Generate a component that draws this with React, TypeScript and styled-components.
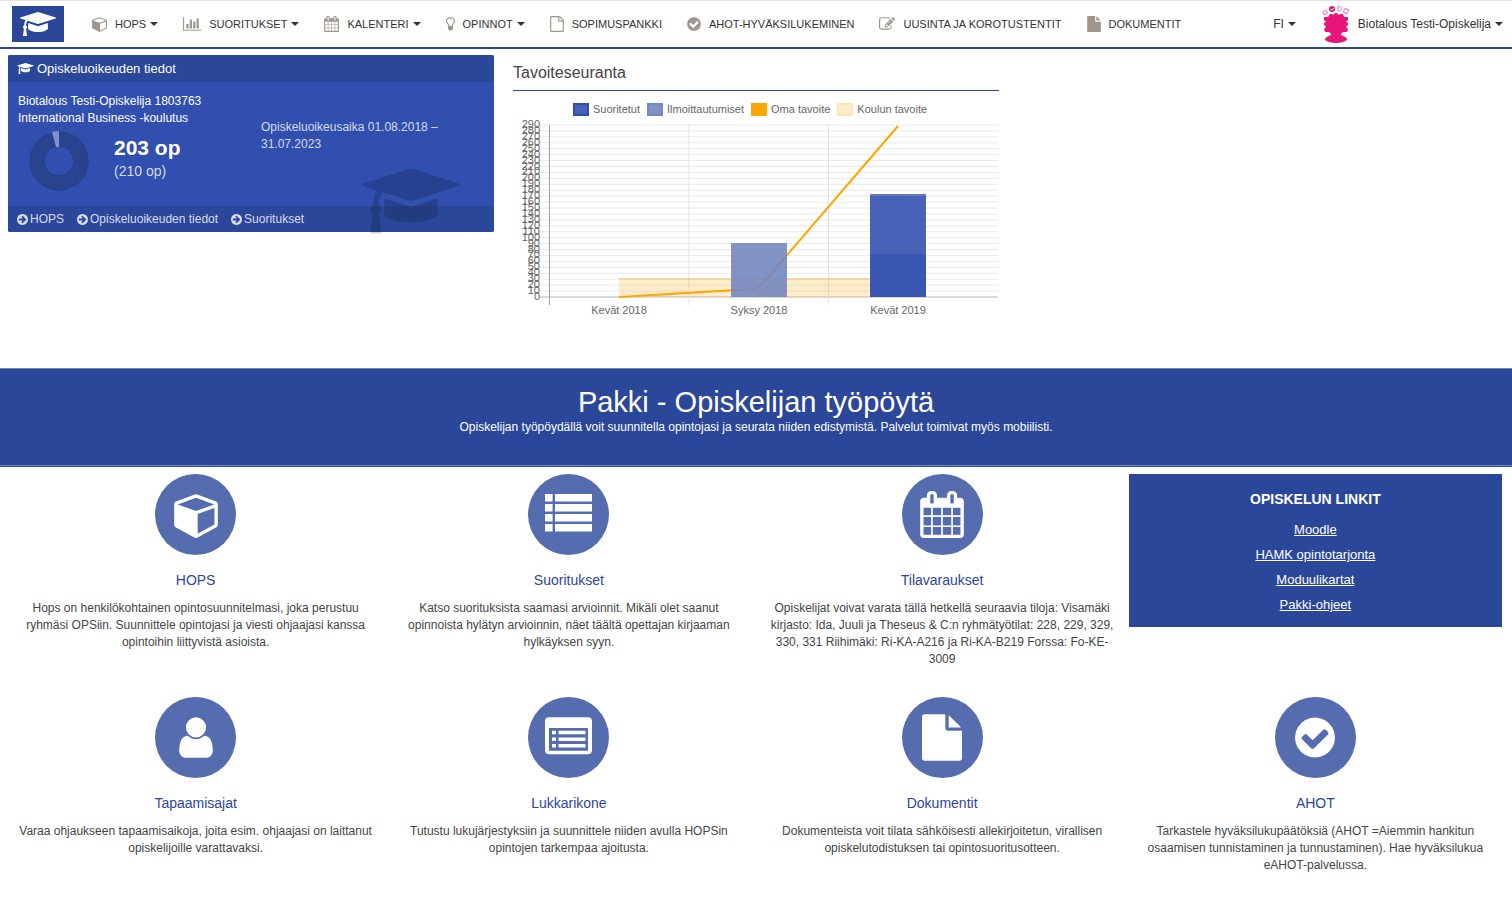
import React from 'react';
import styled, { createGlobalStyle } from 'styled-components';

const navy = '#2b4799';

const GlobalStyle = createGlobalStyle`
  *, *::before, *::after { box-sizing: border-box; }
  body {
    margin: 0;
    background: #fff;
    color: #444;
    font-family: "Liberation Sans", Arial, Helvetica, sans-serif;
    font-size: 12px;
    line-height: 17px;
  }
  h1, h2, h3, p, ul { margin: 0; padding: 0; font-weight: normal; }
  ul { list-style: none; }
  a { color: inherit; text-decoration: none; }
  button { font: inherit; color: inherit; background: none; border: 0; padding: 0; cursor: pointer; }
  svg { display: block; flex: none; }
`;

/* ---------- icons ---------- */

type Shape = { x: number; w: number; d: string };

const shapes: Record<string, Shape> = {
  cap: {
    x: 0,
    w: 2304,
    d: 'M1774 836l18 316q4 69-82 128t-235 93.5-323 34.5-323-34.5-235-93.5-82-128l18-316 574 181q22 7 48 7t48-7zm530-324q0 23-22 31l-1120 352q-4 1-10 1t-10-1l-652-206q-43 34-71 111.5t-34 178.5q63 36 63 109 0 69-58 107l58 433q2 14-8 25-9 11-24 11h-192q-15 0-24-11-10-11-8-25l58-433q-58-38-58-107 0-73 65-111 11-207 98-330l-333-104q-22-8-22-31t22-31l1120-352q4-1 10-1t10 1l1120 352q22 8 22 31z',
  },
  cube: {
    x: 0,
    w: 1664,
    d: 'M896 1629l640-349v-636l-640 233v752zm-64-865l698-254-698-254-698 254zm832-252v768q0 35-18 65t-49 47l-704 384q-28 16-61 16t-61-16l-704-384q-31-17-49-47t-18-65v-768q0-40 23-73t61-47l704-256q22-8 44-8t44 8l704 256q38 14 61 47t23 73z',
  },
  chart: {
    x: 0,
    w: 2048,
    d: 'M640 896v512h-256v-512h256zm384-512v1024h-256v-1024h256zm1024 1152v128h-2048v-1536h128v1408h1920zm-640-896v768h-256v-768h256zm384-384v1152h-256v-1152h256z',
  },
  calendar: {
    x: 64,
    w: 1664,
    d: 'M192 1664h288v-288h-288v288zm352 0h320v-288h-320v288zm-352-352h288v-320h-288v320zm352 0h320v-320h-320v320zm-352-384h288v-288h-288v288zm736 736h320v-288h-320v288zm-384-736h320v-288h-320v288zm768 736h288v-288h-288v288zm-384-352h320v-320h-320v320zm-352-864v-288q0-13-9.5-22.5t-22.5-9.5h-64q-13 0-22.5 9.5t-9.5 22.5v288q0 13 9.5 22.5t22.5 9.5h64q13 0 22.5-9.5t9.5-22.5zm736 864h288v-320h-288v320zm-384-384h320v-288h-320v288zm384 0h288v-288h-288v288zm32-480v-288q0-13-9.5-22.5t-22.5-9.5h-64q-13 0-22.5 9.5t-9.5 22.5v288q0 13 9.5 22.5t22.5 9.5h64q13 0 22.5-9.5t9.5-22.5zm384-64v1280q0 52-38 90t-90 38h-1408q-52 0-90-38t-38-90v-1280q0-52 38-90t90-38h128v-96q0-66 47-113t113-47h64q66 0 113 47t47 113v96h384v-96q0-66 47-113t113-47h64q66 0 113 47t47 113v96h128q52 0 90 38t38 90z',
  },
  bulb: {
    x: 384,
    w: 1024,
    d: 'M1120 576q0 13-9.5 22.5t-22.5 9.5-22.5-9.5-9.5-22.5q0-46-54-71t-106-25q-13 0-22.5-9.5t-9.5-22.5 9.5-22.5 22.5-9.5q50 0 99.5 16t87 54 37.5 90zm160 0q0-72-34.5-134t-90-101.5-123-62-136.5-22.5-136.5 22.5-123 62-90 101.5-34.5 134q0 101 68 180 10 11 30.5 33t30.5 33q128 153 141 298h228q13-145 141-298 10-11 30.5-33t30.5-33q68-79 68-180zm128 0q0 155-103 268-45 49-74.5 87t-59.5 95.5-34 107.5q47 28 47 82 0 37-25 64 25 27 25 64 0 52-45 81 13 23 13 47 0 46-31.5 71t-77.5 25q-20 44-60 70t-87 26-87-26-60-70q-46 0-77.5-25t-31.5-71q0-24 13-47-45-29-45-81 0-37 25-64-25-27-25-64 0-54 47-82-4-50-34-107.5t-59.5-95.5-74.5-87q-103-113-103-268 0-99 44.5-184.5t117-142 164-89 186.5-32.5 186.5 32.5 164 89 117 142 44.5 184.5z',
  },
  fileOutline: {
    x: 128,
    w: 1536,
    d: 'M1596 380q28 28 48 76t20 88v1152q0 40-28 68t-68 28h-1344q-40 0-68-28t-28-68v-1600q0-40 28-68t68-28h896q40 0 88 20t76 48zm-444-244v376h376q-10-29-22-41l-313-313q-12-12-41-22zm384 1528v-1024h-416q-40 0-68-28t-28-68v-416h-768v1536h1280z',
  },
  check: {
    x: 128,
    w: 1536,
    d: 'M1412 734q0-28-18-46l-91-90q-19-19-45-19t-45 19l-408 407-226-226q-19-19-45-19t-45 19l-91 90q-18 18-18 46 0 27 18 45l362 362q19 19 45 19 27 0 46-19l543-543q18-18 18-45zm252 162q0 209-103 385.5t-279.5 279.5-385.5 103-385.5-103-279.5-279.5-103-385.5 103-385.5 279.5-279.5 385.5-103 385.5 103 279.5 279.5 103 385.5z',
  },
  edit: {
    x: 0,
    w: 1792,
    d: 'M888 1184l116-116-152-152-116 116v56h96v96h56zm440-720q-16-16-33 1l-350 350q-17 17-1 33t33-1l350-350q17-17 1-33zm80 594v190q0 119-84.5 203.5t-203.5 84.5h-832q-119 0-203.5-84.5t-84.5-203.5v-832q0-119 84.5-203.5t203.5-84.5h832q63 0 117 25 15 7 18 23 3 17-9 29l-49 49q-14 14-32 8-23-6-45-6h-832q-66 0-113 47t-47 113v832q0 66 47 113t113 47h832q66 0 113-47t47-113v-126q0-13 9-22l64-64q15-15 35-7t20 29zm-96-738l288 288-672 672h-288v-288zm444 132l-92 92-288-288 92-92q28-28 68-28t68 28l152 152q28 28 28 68t-28 68z',
  },
  file: {
    x: 128,
    w: 1536,
    d: 'M1152 512v-472q22 14 36 28l408 408q14 14 28 36h-472zm-128 32q0 40 28 68t68 28h544v1056q0 40-28 68t-68 28h-1344q-40 0-68-28t-28-68v-1600q0-40 28-68t68-28h800v544z',
  },
  arrow: {
    x: 128,
    w: 1536,
    d: 'M1413 896q0-27-18-45l-91-91-362-362q-18-18-45-18t-45 18l-91 91q-18 18-18 45t18 45l189 189h-502q-26 0-45 19t-19 45v128q0 26 19 45t45 19h502l-189 189q-19 19-19 45t19 45l91 91q18 18 45 18t45-18l362-362 91-91q18-18 18-45zm251 0q0 209-103 385.5t-279.5 279.5-385.5 103-385.5-103-279.5-279.5-103-385.5 103-385.5 279.5-279.5 385.5-103 385.5 103 279.5 279.5 103 385.5z',
  },
  user: {
    x: 256,
    w: 1280,
    d: 'M1536 1399q0 109-62.5 187t-150.5 78h-854q-88 0-150.5-78t-62.5-187q0-85 8.5-160.5t31.5-152 58.5-131 94-89 134.5-34.5q131 128 313 128t313-128q76 0 134.5 34.5t94 89 58.5 131 31.5 152 8.5 160.5zm-256-887q0 159-112.5 271.5t-271.5 112.5-271.5-112.5-112.5-271.5 112.5-271.5 271.5-112.5 271.5 112.5 112.5 271.5z',
  },
  list: {
    x: 0,
    w: 1792,
    d: 'M0 114h290v290h-290zM381 114h1411v290h-1411zM0 496h290v290h-290zM381 496h1411v290h-1411zM0 877h290v290h-290zM381 877h1411v290h-1411zM0 1258h290v290h-290zM381 1258h1411v290h-1411z',
  },
  listAlt: {
    x: 0,
    w: 1792,
    d: 'M160 128h1472q160 0 160 160v1088q0 160-160 160h-1472q-160 0-160-160v-1088q0-160 160-160zM152 534v864h1488v-864zM267 640h152v136h-152zM515 640h1030v136h-1030zM267 892h152v136h-152zM515 892h1030v136h-1030zM267 1144h152v136h-152zM515 1144h1030v136h-1030z',
  },
};

function Icon({ name, size }: { name: string; size: number }) {
  const s = shapes[name];
  return (
    <svg
      width={Math.round((s.w / 1792) * size)}
      height={size}
      viewBox={`${s.x} 0 ${s.w} 1792`}
      fill="currentColor"
      fillRule={name === 'listAlt' ? 'evenodd' : 'nonzero'}
      aria-hidden="true"
    >
      <path d={s.d} />
    </svg>
  );
}

function Avatar() {
  return (
    <svg width="30" height="38" viewBox="0 0 30 38" aria-hidden="true">
      <g fill="#e8137b">
        <path d="M9 9l2 0 1 1 2-2 2 0 2 2 1-1 3 0 1 3 4 0 0 3-2 2 2 1 0 2-2 2 2 2-1 3-4 0-2 2 0 1q6 2 6 5-4 3-11 3t-11-3q0-3 6-5l0-1-2-2-4 0-1-3 2-2-2-2 0-2 2-1-2-2 0-3 4 0z" />
        <circle cx="11" cy="4" r="3" />
      </g>
      <path d="M9.500 4l1.500 1 2-2" fill="none" stroke="#fff" />
      <g fill="none" stroke="#ee7fb5">
        <rect x="2" y="6" width="4" height="3" transform="rotate(-30 4 7)" />
        <path d="M17 6V1q5 1 3 4-1 2-3 1" />
        <rect x="23" y="4" width="4" height="4" transform="rotate(30 25 6)" />
      </g>
    </svg>
  );
}

/* ---------- top navigation ---------- */

const TopBar = styled.header`
  display: flex;
  align-items: center;
  height: 49px;
  padding: 0 9px 0 12px;
  border-top: 1px solid #e5e0e3;
  border-bottom: 2px solid ${navy};
`;

const Logo = styled.a`
  display: flex;
  align-items: center;
  justify-content: center;
  width: 52px;
  height: 36px;
  margin-right: 28px;
  background: ${navy};
  color: #fff;
`;

const Menu = styled.ul`
  display: flex;
  gap: 25px;
  flex: 1;
`;

const MenuButton = styled.button`
  display: flex;
  align-items: center;
  height: 17px;
  color: #333;
  font-size: 11px;
  white-space: nowrap;
`;

const MenuLink = styled(MenuButton).attrs({ as: 'a' })<{ href: string }>``;

const MenuIcon = styled.span`
  margin-right: 8px;
  color: #a0968c;
`;

const Caret = styled.span`
  margin-left: 4px;
  border: 4px solid transparent;
  border-top-color: #333;
  border-bottom: 0;
`;

const AccountArea = styled.div`
  display: flex;
  align-items: center;
  gap: 25px;
`;

const AccountButton = styled(MenuButton)`
  height: 38px;
  font-size: 12px;
`;

const AvatarSlot = styled.span`
  margin-right: 7px;
`;

const menu = [
  { icon: 'cube', label: 'HOPS', drop: true },
  { icon: 'chart', label: 'SUORITUKSET', drop: true },
  { icon: 'calendar', label: 'KALENTERI', drop: true },
  { icon: 'bulb', label: 'OPINNOT', drop: true },
  { icon: 'fileOutline', label: 'SOPIMUSPANKKI' },
  { icon: 'check', label: 'AHOT-HYVÄKSILUKEMINEN' },
  { icon: 'edit', label: 'UUSINTA JA KOROTUSTENTIT' },
  { icon: 'file', label: 'DOKUMENTIT' },
];

/* ---------- dashboard widgets ---------- */

const Widgets = styled.section`
  display: grid;
  grid-template-columns: repeat(3, minmax(0, 1fr));
  gap: 19px;
  align-items: start;
  min-height: 319px;
  padding: 6px 8px 0;
`;

const StudyCard = styled.article`
  position: relative;
  border-radius: 2px;
  background: #304fae;
  color: #fff;
`;

const CardHeader = styled.h2`
  display: flex;
  align-items: center;
  gap: 3px;
  height: 27px;
  padding: 0 9px;
  background: ${navy};
  border-radius: 2px 2px 0 0;
  font-size: 13px;
`;

const CardBody = styled.div`
  display: grid;
  grid-template-columns: 1fr 1fr;
  height: 124px;
  padding: 11px 10px 0;
`;

const Credits = styled.div`
  display: flex;
  gap: 24px;
  padding: 3px 0 0 10px;
`;

const CreditTotal = styled.strong`
  display: block;
  padding-top: 4px;
  font-size: 21px;
  line-height: 27px;
`;

const CreditGoal = styled.span`
  color: #d6dcef;
  font-size: 14px;
  line-height: 20px;
`;

const Period = styled.p`
  padding: 26px 30px 0 10px;
  color: #d6dcef;
`;

const CardFooter = styled.nav`
  display: flex;
  gap: 13px;
  height: 26px;
  padding: 0 9px;
  background: ${navy};
  border-radius: 0 0 2px 2px;
`;

const FooterLink = styled.a`
  display: flex;
  align-items: center;
  gap: 2px;
  color: #d6dcef;
`;

const Watermark = styled.span`
  position: absolute;
  right: 34px;
  bottom: -7px;
  color: rgba(0, 0, 0, 0.17);
  pointer-events: none;
`;

const ChartHeading = styled.h2`
  height: 36px;
  padding-top: 8px;
  border-bottom: 1px solid ${navy};
  color: #444;
  font-size: 16px;
  line-height: 20px;
`;

const Legend = styled.ul`
  display: flex;
  justify-content: center;
  gap: 7px;
  padding: 10px 12px 0 0;
  color: #666;
  font-size: 11px;
`;

const LegendItem = styled.li`
  display: flex;
  align-items: center;
  gap: 4px;
`;

const Swatch = styled.span<{ $fill: string; $edge: string }>`
  width: 16px;
  height: 13px;
  border: 2px solid ${(p) => p.$edge};
  background: ${(p) => p.$fill};
`;

const Plot = styled.svg`
  width: 100%;
  height: auto;
  font-size: 11px;
  fill: #666;
`;

const ticks = Array.from({ length: 30 }, (_, i) => i * 10);
const yOf = (v: number) => 179 - (v * 172) / 290;

function GoalChart() {
  return (
    <Plot viewBox="0 0 486 204" role="img" aria-label="Tavoiteseuranta">
      {ticks.map((t) => (
        <line key={t} x1="27" x2="485" y1={yOf(t)} y2={yOf(t)} stroke={t ? '#e9e9e9' : '#b5b5b5'} />
      ))}
      <path d="M36.500 7V187" stroke="#a0a0a0" />
      <path d="M176 7V187M315.500 7V187" stroke="#e2e2e2" />
      {ticks.map((t) => (
        <text key={t} x="27" y={yOf(t) + 3} textAnchor="end">
          {t}
        </text>
      ))}
      <rect x="106" y="160" width="279" height="19" fill="#ffa500" fillOpacity="0.2" />
      <path d="M106 161H385" stroke="#ffa500" strokeOpacity="0.2" strokeWidth="2" />
      <path d="M106 179L240 171Q246 170.500 250 165L385 8" fill="none" stroke="#ffa500" strokeWidth="2" />
      <rect x="218" y="125" width="56" height="54" fill="#7386bf" fillOpacity="0.9" />
      <rect x="357" y="76" width="56" height="103" fill="#4661b6" />
      <path d="M357 77H413" stroke="#8093cc" />
      <rect x="357" y="136" width="56" height="43" fill="#3957b2" />
      <g textAnchor="middle">
        <text x="106" y="196">Kevät 2018</text>
        <text x="246" y="196">Syksy 2018</text>
        <text x="385" y="196">Kevät 2019</text>
      </g>
    </Plot>
  );
}

/* ---------- banner ---------- */

const Banner = styled.section`
  height: 99px;
  padding-top: 16px;
  border-top: 1px solid #7387c0;
  border-bottom: 1px solid ${navy};
  background: ${navy};
  box-shadow: inset 0 -1px 0 #7387c0;
  color: #fff;
  text-align: center;
`;

const BannerTitle = styled.h1`
  font-size: 29px;
  line-height: 34px;
`;

/* ---------- services ---------- */

const Services = styled.main`
  display: grid;
  grid-template-columns: repeat(4, minmax(0, 1fr));
  row-gap: 29px;
  align-items: start;
  padding: 7px 10px 40px 9px;
`;

const Service = styled.article`
  display: flex;
  flex-direction: column;
  align-items: center;
  padding: 0 8px;
  text-align: center;
`;

const Disc = styled.a`
  display: flex;
  align-items: center;
  justify-content: center;
  width: 81px;
  height: 81px;
  border-radius: 50%;
  background: #556cae;
  color: #fff;
`;

const ServiceTitle = styled.h3`
  padding: 15px 0 10px;
  color: ${navy};
  font-size: 14px;
  line-height: 20px;
`;

const LinkBox = styled.aside`
  height: 153px;
  padding-top: 15px;
  background: ${navy};
  color: #fff;
  font-size: 13px;
  text-align: center;
`;

const LinkBoxTitle = styled.h3`
  && { font-weight: bold; }
  font-size: 14px;
  line-height: 20px;
  padding-bottom: 8px;
`;

const StudyLink = styled.a`
  display: block;
  line-height: 25px;
  text-decoration: underline;
`;

const services = [
  { icon: 'cube', title: 'HOPS', text: 'Hops on henkilökohtainen opintosuunnitelmasi, joka perustuu ryhmäsi OPSiin. Suunnittele opintojasi ja viesti ohjaajasi kanssa opintoihin liittyvistä asioista.' },
  { icon: 'list', title: 'Suoritukset', text: 'Katso suorituksista saamasi arvioinnit. Mikäli olet saanut opinnoista hylätyn arvioinnin, näet täältä opettajan kirjaaman hylkäyksen syyn.' },
  { icon: 'calendar', title: 'Tilavaraukset', text: 'Opiskelijat voivat varata tällä hetkellä seuraavia tiloja: Visamäki kirjasto: Ida, Juuli ja Theseus & C:n ryhmätyötilat: 228, 229, 329, 330, 331 Riihimäki: Ri-KA-A216 ja Ri-KA-B219 Forssa: Fo-KE-3009' },
  { icon: 'user', title: 'Tapaamisajat', text: 'Varaa ohjaukseen tapaamisaikoja, joita esim. ohjaajasi on laittanut opiskelijoille varattavaksi.' },
  { icon: 'listAlt', title: 'Lukkarikone', text: 'Tutustu lukujärjestyksiin ja suunnittele niiden avulla HOPSin opintojen tarkempaa ajoitusta.' },
  { icon: 'file', title: 'Dokumentit', text: 'Dokumenteista voit tilata sähköisesti allekirjoitetun, virallisen opiskelutodistuksen tai opintosuoritusotteen.' },
  { icon: 'check', title: 'AHOT', text: 'Tarkastele hyväksilukupäätöksiä (AHOT =Aiemmin hankitun osaamisen tunnistaminen ja tunnustaminen). Hae hyväksilukua eAHOT-palvelussa.' },
];

function ServiceCard({ icon, title, text }: { icon: string; title: string; text: string }) {
  return (
    <Service>
      <Disc href="#" aria-label={title}>
        <Icon name={icon} size={47} />
      </Disc>
      <ServiceTitle>{title}</ServiceTitle>
      <p>{text}</p>
    </Service>
  );
}

export default function App() {
  return (
    <>
      <GlobalStyle />
      <TopBar>
        <Logo href="#" aria-label="Pakki">
          <Icon name="cap" size={28} />
        </Logo>
        <Menu>
          {menu.map((m) => {
            const content = (
              <>
                <MenuIcon>
                  <Icon name={m.icon} size={16} />
                </MenuIcon>
                {m.label}
                {m.drop && <Caret />}
              </>
            );
            return (
              <li key={m.label}>
                {m.drop ? <MenuButton>{content}</MenuButton> : <MenuLink href="#">{content}</MenuLink>}
              </li>
            );
          })}
        </Menu>
        <AccountArea>
          <AccountButton>
            FI
            <Caret />
          </AccountButton>
          <AccountButton>
            <AvatarSlot>
              <Avatar />
            </AvatarSlot>
            Biotalous Testi-Opiskelija
            <Caret />
          </AccountButton>
        </AccountArea>
      </TopBar>

      <Widgets>
        <StudyCard>
          <CardHeader>
            <Icon name="cap" size={13} />
            Opiskeluoikeuden tiedot
          </CardHeader>
          <CardBody>
            <div>
              <p>Biotalous Testi-Opiskelija 1803763</p>
              <p>International Business -koulutus</p>
              <Credits>
                <svg width="62" height="62" viewBox="0 0 62 62" aria-hidden="true">
                  <circle cx="31" cy="31" r="22" fill="none" stroke="#2a438f" strokeWidth="15" />
                  <circle cx="31" cy="31" r="29" fill="none" stroke="#263f8b" />
                  <circle cx="31" cy="31" r="15" fill="none" stroke="#263f8b" />
                  <path d="M24 2Q27 1 31 1V17L28 17Z" fill="#7f91c9" />
                </svg>
                <div>
                  <CreditTotal>203 op</CreditTotal>
                  <CreditGoal>(210 op)</CreditGoal>
                </div>
              </Credits>
            </div>
            <Period>Opiskeluoikeusaika 01.08.2018 – 31.07.2023</Period>
          </CardBody>
          <CardFooter>
            {['HOPS', 'Opiskeluoikeuden tiedot', 'Suoritukset'].map((l) => (
              <FooterLink href="#" key={l}>
                <Icon name="arrow" size={13} />
                {l}
              </FooterLink>
            ))}
          </CardFooter>
          <Watermark>
            <Icon name="cap" size={76} />
          </Watermark>
        </StudyCard>

        <article>
          <ChartHeading>Tavoiteseuranta</ChartHeading>
          <Legend>
            <LegendItem><Swatch $fill="#4661b6" $edge="#304fae" />Suoritetut</LegendItem>
            <LegendItem><Swatch $fill="#7f91c5" $edge="#7387c0" />Ilmoittautumiset</LegendItem>
            <LegendItem><Swatch $fill="#ffa500" $edge="#ffa500" />Oma tavoite</LegendItem>
            <LegendItem><Swatch $fill="#ffedcc" $edge="#ffe4b3" />Koulun tavoite</LegendItem>
          </Legend>
          <GoalChart />
        </article>
      </Widgets>

      <Banner>
        <BannerTitle>Pakki - Opiskelijan työpöytä</BannerTitle>
        <p>Opiskelijan työpöydällä voit suunnitella opintojasi ja seurata niiden edistymistä. Palvelut toimivat myös mobiilisti.</p>
      </Banner>

      <Services>
        {services.slice(0, 3).map((s) => (
          <ServiceCard key={s.title} {...s} />
        ))}
        <LinkBox>
          <LinkBoxTitle>OPISKELUN LINKIT</LinkBoxTitle>
          {['Moodle', 'HAMK opintotarjonta', 'Moduulikartat', 'Pakki-ohjeet'].map((l) => (
            <StudyLink href="#" key={l}>{l}</StudyLink>
          ))}
        </LinkBox>
        {services.slice(3).map((s) => (
          <ServiceCard key={s.title} {...s} />
        ))}
      </Services>
    </>
  );
}
